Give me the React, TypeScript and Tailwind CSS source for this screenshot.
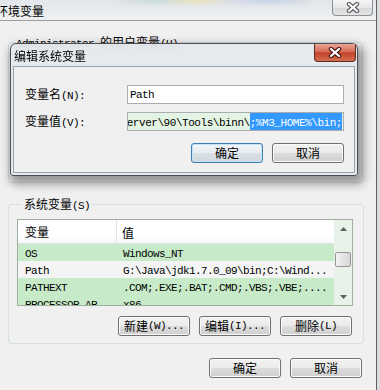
import clsx from "clsx";

const CJK_RE = /([\u3400-\u9fff]+)/;

// SimSun-like mix: CJK glyphs at 12px, latin glyphs narrow and fixed width
function Txt({ s }: { s: string }) {
  return (
    <>
      {s
        .split(CJK_RE)
        .filter(Boolean)
        .map((p, i) =>
          CJK_RE.test(p) ? (
            <span key={i} className="font-['Noto_Sans_CJK_SC',sans-serif] text-[12px]">
              {p}
            </span>
          ) : (
            <span
              key={i}
              className="whitespace-pre font-['Liberation_Mono',monospace] text-[11px] tracking-[-0.6px]"
            >
              {p}
            </span>
          )
        )}
    </>
  );
}

function Btn({ label, focus }: { label: string; focus?: boolean }) {
  return (
    <div
      className={clsx(
        "flex h-[20px] w-[72px] items-center justify-center rounded-[3px] border leading-[14px] text-black",
        focus
          ? "border-[#3c7fb1] bg-[linear-gradient(#f3f6f9,#e7ecf0_50%,#d9e0e6_50%,#d0d8de)] shadow-[inset_0_0_0_1px_#c4e3f7]"
          : "border-[#707070] bg-[linear-gradient(#f2f2f2,#ebebeb_50%,#dddddd_50%,#cfcfcf)] shadow-[inset_0_0_0_1px_#fbfbfb]"
      )}
    >
      <Txt s={label} />
    </div>
  );
}

function CloseX({ outline }: { outline: string }) {
  return (
    <svg width="14" height="11" viewBox="0 0 14 11">
      <path d="M3 2 L11 9 M11 2 L3 9" stroke={outline} strokeWidth="4.4" strokeLinecap="round" />
      <path d="M3 2 L11 9 M11 2 L3 9" stroke="#ffffff" strokeWidth="2.2" strokeLinecap="round" />
    </svg>
  );
}

const rows = [
  { name: "OS", value: "Windows_NT", bg: "bg-[#c7ebc8]" },
  { name: "Path", value: "G:\\Java\\jdk1.7.0_09\\bin;C:\\Wind...", bg: "bg-[#f4f4f4]" },
  { name: "PATHEXT", value: ".COM;.EXE;.BAT;.CMD;.VBS;.VBE;....", bg: "bg-[#c7ebc8]" },
  { name: "PROCESSOR_AR", value: "x86", bg: "bg-[#c7ebc8]" },
];

function Arrow({ up }: { up?: boolean }) {
  return (
    <svg width="7" height="4" viewBox="0 0 7 4">
      <path d={up ? "M0 4 L3.5 0 L7 4 Z" : "M0 0 L3.5 4 L7 0 Z"} fill="#5f5f5f" />
    </svg>
  );
}

function VarList() {
  return (
    <div className="flex h-[87px] w-[336px] overflow-hidden border border-[#9cb09c] bg-[#f4f4f4]">
      <div className="flex flex-1 flex-col overflow-hidden">
        <div className="flex h-[24px] shrink-0 items-center border-b border-[#e3e3e3] bg-[linear-gradient(#ffffff,#ffffff_70%,#f5f6f7)]">
          <div className="flex h-full w-[99px] items-center border-r border-[#e3e3e3] pl-[7px]">
            <Txt s="变量" />
          </div>
          <div className="pl-[5px]">
            <Txt s="值" />
          </div>
        </div>
        {rows.map((r) => (
          <div key={r.name} className={clsx("flex h-[17px] shrink-0 items-center leading-[14px]", r.bg)}>
            <div className="w-[99px] pl-[7px]">
              <Txt s={r.name} />
            </div>
            <div className="pl-[6px] whitespace-nowrap">
              <Txt s={r.value} />
            </div>
          </div>
        ))}
      </div>
      <div className="flex w-[18px] flex-col items-center bg-[#e9f2e9]">
        <div className="flex h-[17px] items-center justify-center">
          <Arrow up />
        </div>
        <div className="mt-[15px] h-[15px] w-[16px] rounded-[2px] border border-[#979797] bg-[linear-gradient(90deg,#f3f3f3,#e4e4e4_50%,#d6d6d6)]" />
        <div className="flex-1" />
        <div className="flex h-[17px] items-center justify-center">
          <Arrow />
        </div>
      </div>
    </div>
  );
}

function EditDialog() {
  return (
    <div className="absolute left-[10px] top-[43px] flex h-[133px] w-[348px] flex-col rounded-t-[6px] rounded-b-[3px] border border-[#4b4f55] bg-[#e6e9ec]/90 shadow-[3px_5px_10px_3px_rgba(0,0,0,0.38)] backdrop-blur-[2px]">
      <div className="flex h-[22px] shrink-0 items-start">
        <div className="pl-[3px] pt-[3px] leading-[16px] text-black">
          <Txt s="编辑系统变量" />
        </div>
        <div className="ml-auto mr-[1px] flex h-[18px] w-[42px] items-center justify-center rounded-b-[4px] border border-t-0 border-[#5d2a20] bg-[linear-gradient(#eaa696,#d56b56_45%,#c4422b_52%,#d4704f)]">
          <CloseX outline="#4a1d16" />
        </div>
      </div>
      <div className="mx-[2px] mb-[2px] flex flex-1 flex-col border border-[#9aa2aa] bg-[#f0f0f0] pt-[18px]">
        <div className="flex items-center pl-[11px]">
          <div className="w-[102px] leading-[14px]">
            <Txt s="变量名(N):" />
          </div>
          <div className="flex h-[19px] w-[217px] items-center overflow-hidden border border-[#abadb3] bg-white pl-[2px] leading-[14px]">
            <Txt s="Path" />
          </div>
        </div>
        <div className="mt-[8px] flex items-center pl-[11px]">
          <div className="w-[102px] leading-[14px]">
            <Txt s="变量值(V):" />
          </div>
          {/* scrolled to the end: text overflows on the left */}
          <div className="flex h-[19px] w-[217px] items-center justify-end overflow-hidden whitespace-nowrap border border-[#abadb3] bg-[#e4f4e4] pr-[1px] leading-[15px] [&_span]:tracking-[-0.45px]">
            <span className="shrink-0">
              <Txt s="SQLServer\90\Tools\binn\" />
            </span>
            <span className="shrink-0 bg-[#3399ff] text-white">
              <Txt s=";%M3_HOME%\bin;" />
            </span>
          </div>
        </div>
        <div className="mt-[12px] flex justify-end gap-[9px] pr-[10px]">
          <Btn label="确定" focus />
          <Btn label="取消" />
        </div>
      </div>
    </div>
  );
}

export default function App() {
  return (
    <div className="relative h-[390px] w-[380px] overflow-hidden bg-[#dcdcdc] text-black">
      <div className="flex h-full w-[377px] flex-col border-r border-[#5e6166] bg-[#f0f0f0]">
        {/* background window title bar */}
        <div className="relative flex h-[21px] shrink-0 items-start overflow-hidden border-b border-[#9a9da2] bg-[linear-gradient(#e3e6ea,#eef0f2)]">
          <div className="absolute left-[120px] top-[-6px] h-[8px] w-[190px] rounded-full bg-[linear-gradient(90deg,#d9dde2,#b9d6d6,#f0e2a0,#d0d6e8,#b5c6e6,#d9dde2)] blur-[3px]" />
          <div className="relative -ml-[4px] pt-[3px] leading-[15px]">
            <Txt s="环境变量" />
          </div>
          <div className="relative ml-auto mr-[3px] flex h-[16px] w-[41px] items-center justify-center rounded-b-[4px] border border-t-0 border-[#8e9196] bg-[linear-gradient(#f6f6f6,#e6e6e6_50%,#d9d9d9_52%,#e3e3e3)]">
            <CloseX outline="#5a5d62" />
          </div>
        </div>

        <div className="flex flex-col pl-[8px]">
          <fieldset className="mt-[13px] h-[149px] w-[355px] rounded-[3px] border border-[#d5dfe5]">
            <legend className="ml-[5px] px-[2px] leading-[14px]">
              <Txt s="Administrator 的用户变量(U)" />
            </legend>
          </fieldset>

          <fieldset className="mt-[13px] h-[148px] w-[356px] rounded-[3px] border border-[#d5dfe5] pl-[8px]">
            <legend className="ml-[5px] px-[2px] leading-[14px]">
              <Txt s="系统变量(S)" />
            </legend>
            <div className="mt-[6px]">
              <VarList />
            </div>
            <div className="mt-[10px] flex justify-end gap-[9px] pr-[11px]">
              <Btn label="新建(W)..." />
              <Btn label="编辑(I)..." />
              <Btn label="删除(L)" />
            </div>
          </fieldset>

          <div className="mt-[14px] flex w-[356px] justify-end gap-[9px] pr-[2px]">
            <Btn label="确定" />
            <Btn label="取消" />
          </div>
        </div>
      </div>
      <EditDialog />
    </div>
  );
}
